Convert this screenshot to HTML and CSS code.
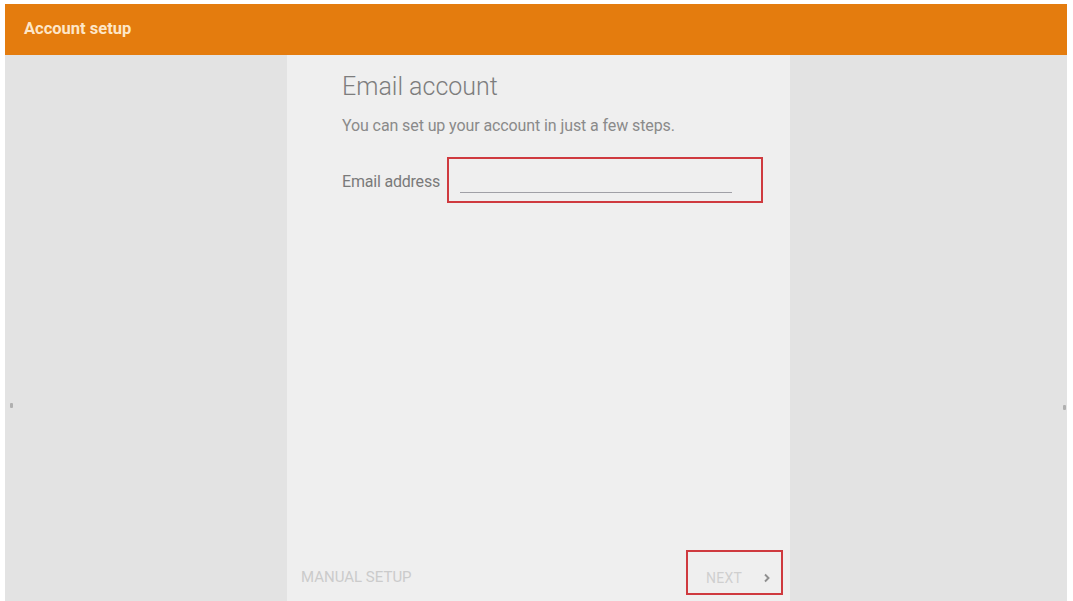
FILE: index.html
```html
<!DOCTYPE html>
<html>
<head>
<meta charset="utf-8">
<link rel="stylesheet" href="styles.css">
</head>
<body>
<div class="frame">
  <header class="appbar">Account setup</header>
  <main class="main">
    <div class="side side-left"><span class="nub"></span></div>
    <section class="card">
      <h1 class="title">Email account</h1>
      <p class="subtitle">You can set up your account in just a few steps.</p>
      <div class="field-row">
        <label class="field-label">Email address</label>
        <div class="field-box"><div class="field-line"></div></div>
      </div>
      <div class="footer">
        <span class="manual">MANUAL SETUP</span>
        <div class="next-box">
          <span class="next">NEXT</span>
          <svg class="chev" width="8" height="10" viewBox="0 0 8 10"><path d="M2 1.5 L5.5 5 L2 8.5" fill="none" stroke="#8f8f8f" stroke-width="1.9"/></svg>
        </div>
      </div>
    </section>
    <div class="side side-right"><span class="nub"></span></div>
  </main>
</div>
</body>
</html>
```
FILE: styles.css
```css
html, body {
  margin: 0;
  padding: 0;
  background: #ffffff;
  font-family: Roboto, "Liberation Sans", sans-serif;
}
.frame {
  width: 1073px;
  height: 601px;
  box-sizing: border-box;
  padding: 4px 6px 0 5px;
  display: flex;
  flex-direction: column;
  overflow: hidden;
}
.appbar {
  height: 51px;
  flex: none;
  background: #e47c0e;
  color: #fde6c8;
  font-weight: 700;
  font-size: 16.5px;
  display: flex;
  align-items: center;
  padding-left: 19px;
  padding-bottom: 2px;
  box-sizing: border-box;
}
.main {
  flex: 1;
  display: flex;
  background: #e3e3e3;
}
.side {
  display: flex;
  align-items: center;
  padding-top: 154px;
  box-sizing: border-box;
}
.side-left {
  width: 282px;
  padding-left: 5px;
}
.side-right {
  flex: 1;
  justify-content: flex-end;
  padding-right: 1px;
  padding-top: 158px;
}
.nub {
  width: 3px;
  height: 5px;
  background: #b0b0b0;
  border-radius: 1px;
}
.card {
  width: 503px;
  background: #efefef;
  display: flex;
  flex-direction: column;
  padding-top: 17px;
  box-sizing: border-box;
}
.title {
  margin: 0 0 0 55px;
  font-weight: 300;
  font-size: 25px;
  line-height: 30px;
  color: #7d7d7d;
}
.subtitle {
  margin: 14px 0 0 55px;
  font-size: 16px;
  line-height: 20px;
  letter-spacing: -0.1px;
  color: #8a8a8a;
}
.field-row {
  display: flex;
  align-items: center;
  margin: 21px 0 0 55px;
}
.field-label {
  width: 105px;
  font-size: 16px;
  letter-spacing: -0.2px;
  color: #7a7a7a;
  padding-top: 2px;
}
.field-box {
  width: 316px;
  height: 46px;
  box-sizing: border-box;
  border: 2px solid #cf3a3f;
  padding: 33px 29px 0 11px;
}
.field-line {
  height: 1px;
  background: #a0a0a6;
}
.footer {
  margin-top: auto;
  display: flex;
  justify-content: space-between;
  align-items: center;
  padding: 0 7px 6px 14px;
}
.manual {
  font-size: 15px;
  color: #cbcbcb;
  padding-top: 9px;
}
.next-box {
  width: 97px;
  height: 45px;
  box-sizing: border-box;
  border: 2px solid #cf3a3f;
  display: flex;
  align-items: center;
  padding: 10px 0 0 18px;
}
.next {
  font-size: 14px;
  letter-spacing: 0.3px;
  color: #cfcfcf;
  width: 57px;
}
.chev {
  display: block;
}
```
